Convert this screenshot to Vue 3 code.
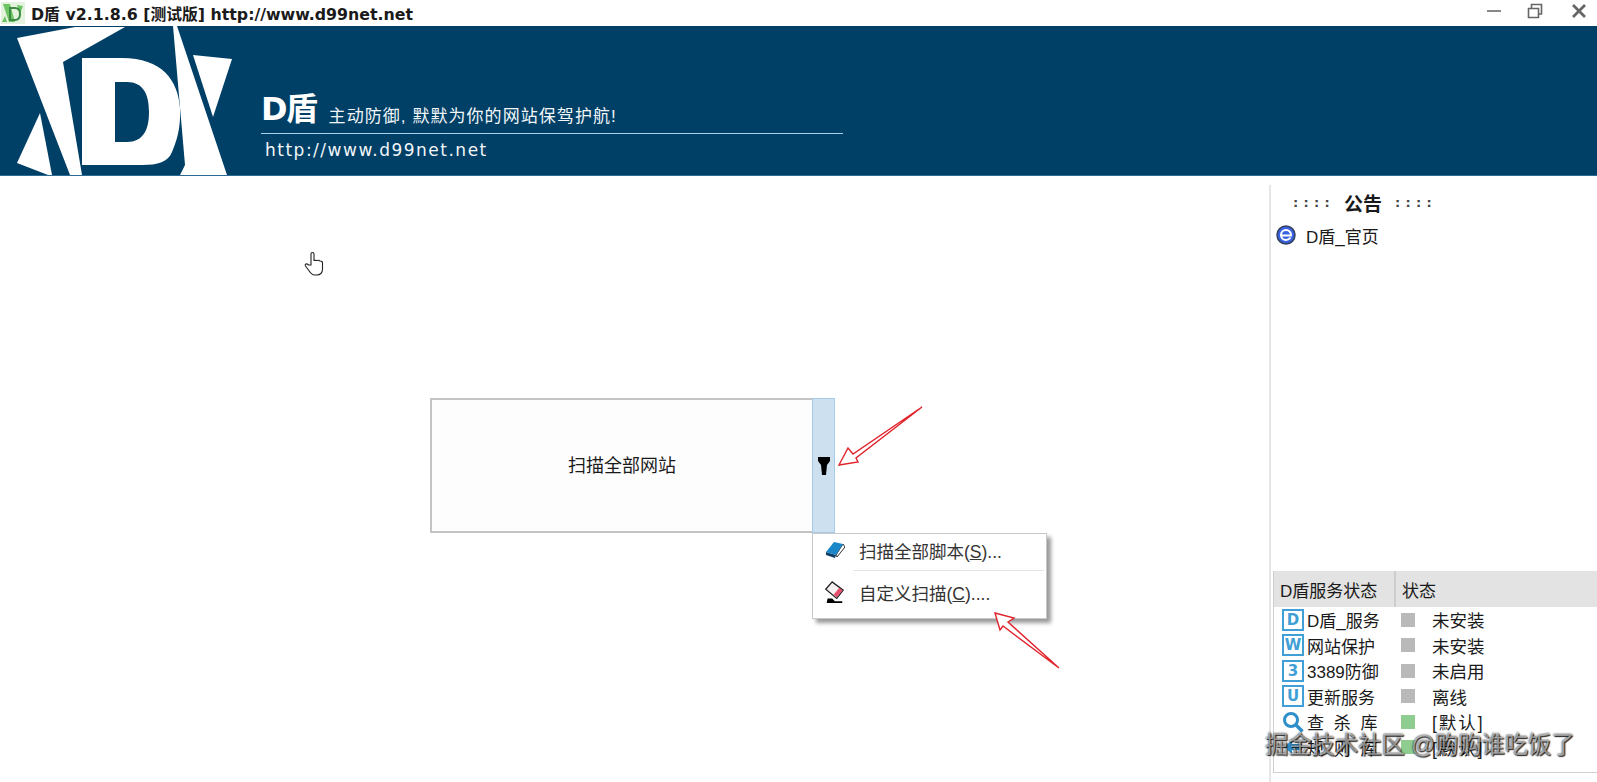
<template>
  <div class="window">
    <header class="titlebar">
      <svg class="app-icon" viewBox="0 0 24 22">
        <rect width="24" height="22" fill="#e4f3de" />
        <path d="M2 2h7l5 18H8z" fill="#6cc463" />
        <path d="M16 3l6 1-3 8z" fill="#6cc463" />
        <path d="M4 14l2 6H1z" fill="#6cc463" />
        <path d="M9 6h5c4 0 5 3 5 6s-1 6-5 6H9z" fill="none" stroke="#3c8a44" stroke-width="2" />
      </svg>
      <span class="title-text">D盾 v2.1.8.6 [测试版] http://www.d99net.net</span>
      <div class="win-controls">
        <svg viewBox="0 0 16 16" class="win-btn"><path d="M1 8h14" stroke="#888" stroke-width="2" /></svg>
        <svg viewBox="0 0 16 16" class="win-btn"><path d="M1.500 5.500h10v9h-10zM4.500 5V1.500h10V11H12" fill="none" stroke="#666" stroke-width="1.600" /></svg>
        <svg viewBox="0 0 16 16" class="win-btn close"><path d="M2 2l12 12M14 2L2 14" stroke="#666" stroke-width="2.800" /></svg>
      </div>
    </header>

    <section class="banner">
      <svg class="logo" viewBox="0 0 240 150">
        <path d="M17 12L75 1h50L63 36l19 113H70z" fill="#fff" />
        <path d="M40 87L17 137l31 12h4z" fill="#fff" />
        <path d="M173 0h4l50 149h-47l5-10z" fill="#fff" />
        <path d="M193 29l39 4-19 58z" fill="#fff" />
        <path fill-rule="evenodd" d="M82 32h40c40 0 56 22 58 50 1 22-4 34-8 44-4 10-14 13-30 13H82zM115 56v60h12c16 0 22-12 22-30s-6-30-22-30z" fill="#fff" />
      </svg>
      <div class="slogan">
        <div class="slogan-top">
          <span class="brand">D盾</span>
          <span class="motto">主动防御, 默默为你的网站保驾护航!</span>
        </div>
        <div class="site-url">http://www.d99net.net</div>
      </div>
    </section>

    <div class="content">
      <main class="main">
        <div class="scan-split">
          <div class="scan-btn">扫描全部网站</div>
          <div class="scan-drop">
            <svg viewBox="0 0 14 18" class="funnel"><path d="M1 0h12v4l-3 4-1 10H5L4 8 1 4z" fill="#000" /></svg>
          </div>
          <ul class="menu">
            <li v-for="item in menuItems" :key="item.label" class="menu-item">
              <svg v-if="item.icon === 'book'" viewBox="0 0 22 22" class="menu-icon">
                <path d="M20 5l2 3-8 10-1-2z" fill="#fff" stroke="#333" stroke-width="1" />
                <path d="M3 13l10 3-1 3-9-3z" fill="#0f3f66" />
                <path d="M3 13L11 3l9 2-7 11z" fill="#1b86c8" />
              </svg>
              <svg v-else viewBox="0 0 24 24" class="menu-icon">
                <path d="M5 19h5l3 3h8v2H4z" fill="#000" />
                <path d="M3 9l7-8 12 9-7 9z" fill="#f6f2f2" stroke="#222" stroke-width="1.400" />
                <path d="M17.500 7.500L21.500 10l-6.500 8-3.500-3z" fill="#e8506e" />
              </svg>
              <span class="menu-label">{{ item.label }}(<u>{{ item.key }}</u>){{ item.dots }}</span>
            </li>
          </ul>
        </div>

        <svg class="hand" viewBox="0 0 20 26">
          <path d="M7 14V3c0-2 3-2 3 0v7c0-1 3-1 3 0 0-1 3-1 3 .5 0-.5 2.500-.5 2.500 1V18c0 4-2 6-6 6h-2c-3 0-4-2-6-5l-3-4c-1-2 1-3 3-1z" fill="#fff" stroke="#222" stroke-width="1.100" />
        </svg>
      </main>

      <aside class="sidebar">
        <div class="notice">
          <div class="notice-title"><span class="dots">::::</span><b>公告</b><span class="dots">::::</span></div>
          <div class="notice-link">
            <svg viewBox="0 0 20 20" class="ie-icon">
              <circle cx="10" cy="10" r="9" fill="#3a62e0" stroke="#33415f" stroke-width="1.500" />
              <path d="M5 10.500h10c0-3.500-2.200-5.500-5-5.500s-5 2.200-5 5 2.200 5 5 5c2.200 0 3.500-1 4.500-2.500" fill="none" stroke="#fff" stroke-width="2" />
            </svg>
            <span>D盾_官页</span>
          </div>
        </div>

        <div class="status-panel">
          <div class="status-head">
            <div class="head-name">D盾服务状态</div>
            <div class="head-state">状态</div>
          </div>
          <div v-for="row in rows" :key="row.name" class="status-row">
            <span class="row-icon">
              <svg v-if="row.glyph === 'search'" viewBox="0 0 22 22" class="search-icon">
                <circle cx="9" cy="9" r="6.500" fill="none" stroke="#2f8fcb" stroke-width="3" />
                <path d="M13.500 13.500l7 7" stroke="#2f8fcb" stroke-width="3.500" />
              </svg>
              <svg v-else-if="row.glyph === 'shield'" viewBox="0 0 22 22" class="search-icon">
                <path d="M2 11l8-7v4h10v6H10v4z" fill="#2f8fcb" />
              </svg>
              <span v-else class="tile">{{ row.glyph }}</span>
            </span>
            <span class="row-name">{{ row.name }}</span>
            <span class="row-dot" :class="{ on: row.on }"></span>
            <span class="row-state" :class="{ wide: row.on }">{{ row.state }}</span>
          </div>
        </div>
      </aside>
    </div>

    <svg class="arrows" viewBox="0 0 1597 782">
      <path d="M839 465L848 448 853 454 922 407 856 458 858 462z" fill="#fff" stroke="#e0242c" stroke-width="1.400" stroke-linejoin="miter" />
      <path d="M995 613L1014 618 1008 622 1059 668 1003 626 1000 630z" fill="#fff" stroke="#e0242c" stroke-width="1.400" stroke-linejoin="miter" />
    </svg>

    <div class="watermark">掘金技术社区 @购购谁吃饭了</div>
  </div>
</template>

<script setup>
const menuItems = [
  { icon: 'book', label: '扫描全部脚本', key: 'S', dots: '...' },
  { icon: 'eraser', label: '自定义扫描', key: 'C', dots: '....' }
]

const rows = [
  { glyph: 'D', name: 'D盾_服务', state: '未安装', on: false },
  { glyph: 'W', name: '网站保护', state: '未安装', on: false },
  { glyph: '3', name: '3389防御', state: '未启用', on: false },
  { glyph: 'U', name: '更新服务', state: '离线', on: false },
  { glyph: 'search', name: '查 杀 库', state: '[默认]', on: true },
  { glyph: 'shield', name: '规 则 库', state: '[默认]', on: true }
]
</script>

<style>
html,
body {
  margin: 0;
  background: #fff;
}
</style>

<style scoped>
.window {
  position: relative;
  width: 1597px;
  height: 782px;
  overflow: hidden;
  display: flex;
  flex-direction: column;
  background: #fff;
  color: #1a1a1a;
  font-family: "Liberation Sans", "Noto Sans CJK SC", sans-serif;
  font-size: 17px;
}

.titlebar {
  height: 26px;
  flex: none;
  display: flex;
  align-items: center;
  padding-left: 1px;
}

.app-icon {
  width: 24px;
  height: 22px;
}

.title-text {
  margin-left: 6px;
  font-family: "DejaVu Sans", "Noto Sans CJK SC", sans-serif;
  font-weight: 700;
  font-size: 15.800px;
  white-space: nowrap;
}

.win-controls {
  margin-left: auto;
  align-self: flex-start;
  display: flex;
  gap: 25px;
  padding: 3px 10px 0 0;
}

.win-btn {
  width: 16px;
  height: 16px;
}

.win-btn.close {
  margin-left: 3px;
}

.banner {
  height: 150px;
  flex: none;
  display: flex;
  background: #003f66;
  border-bottom: 1px solid #2a6c94;
  box-sizing: border-box;
}

.logo {
  width: 240px;
  height: 150px;
  flex: none;
}

.slogan {
  margin-left: 21px;
  width: 582px;
  color: #f2f6f8;
}

.slogan-top {
  height: 108px;
  box-sizing: border-box;
  display: flex;
  align-items: flex-end;
  border-bottom: 1px solid #a9d0e6;
  padding-bottom: 4px;
}

.brand {
  font-family: "DejaVu Sans", "Noto Sans CJK SC", sans-serif;
  font-weight: 700;
  font-size: 32px;
  line-height: 40px;
  letter-spacing: -1.500px;
  color: #fff;
}

.motto {
  margin-left: 12px;
  font-size: 17px;
  line-height: 24px;
  letter-spacing: 1.060px;
}

.site-url {
  padding: 4px 0 0 4px;
  font-family: "DejaVu Sans", sans-serif;
  font-size: 17px;
  line-height: 24px;
  letter-spacing: 1.500px;
}

.content {
  flex: 1;
  display: flex;
  min-height: 0;
}

.main {
  flex: 1;
  position: relative;
  padding: 222px 0 0 430px;
}

.scan-split {
  position: relative;
  display: flex;
  width: 405px;
  height: 135px;
}

.scan-btn {
  flex: 1;
  display: flex;
  align-items: center;
  justify-content: center;
  background: #fdfdfd;
  border: 2px solid #c4c4c4;
  border-right: none;
  font-size: 18px;
  padding-bottom: 4px;
}

.scan-drop {
  width: 23px;
  flex: none;
  box-sizing: border-box;
  display: flex;
  align-items: center;
  justify-content: center;
  background: #cce0f0;
  border: 1px solid #a5cbe6;
}

.funnel {
  width: 14px;
  height: 18px;
}

.menu {
  position: absolute;
  left: 382px;
  top: 135px;
  width: 235px;
  margin: 0;
  padding: 0;
  list-style: none;
  box-sizing: border-box;
  background: #fff;
  border: 1px solid #c8c8c8;
  box-shadow: 4px 4px 4px rgba(0, 0, 0, 0.4);
}

.menu-item {
  height: 36px;
  box-sizing: border-box;
  padding: 0 0 4px 10px;
  display: flex;
  align-items: center;
  color: #333;
}

.menu-item + .menu-item {
  position: relative;
  height: 48px;
  padding-bottom: 4px;
}

.menu-item + .menu-item::before {
  content: "";
  position: absolute;
  left: 40px;
  right: 2px;
  top: 0;
  border-top: 1px solid #e4e4e4;
}

.menu-icon {
  width: 22px;
  height: 22px;
  flex: none;
}

.menu-label {
  margin-left: 14px;
  font-size: 17.500px;
  white-space: nowrap;
}

.hand {
  position: absolute;
  left: 304px;
  top: 75px;
  width: 20px;
  height: 26px;
}

.sidebar {
  width: 328px;
  flex: none;
  margin-top: 9px;
  box-sizing: border-box;
  border-left: 2px solid #e6e6e6;
  display: flex;
  flex-direction: column;
}

.notice {
  flex: 1;
  padding: 5px 0 0 5px;
}

.notice-title {
  display: flex;
  align-items: center;
  gap: 13px;
  padding-left: 17px;
  height: 24px;
  font-size: 19px;
}

.notice-title b {
  margin-left: -4px;
}

.dots {
  font-family: "DejaVu Sans", sans-serif;
  font-size: 13px;
  letter-spacing: 5.300px;
  font-weight: 700;
  color: #444;
}

.notice-link {
  display: flex;
  align-items: center;
  gap: 10px;
  margin-top: 9px;
  height: 24px;
  font-size: 17px;
}

.ie-icon {
  width: 20px;
  height: 20px;
}

.status-panel {
  height: 202px;
  flex: none;
  margin: 0 0 9px 2px;
  box-sizing: border-box;
  border-left: 1px solid #cfcfcf;
  border-bottom: 1px solid #cfcfcf;
}

.status-head {
  height: 36px;
  display: flex;
  background: #e3e3e3;
  font-size: 17px;
  line-height: 42px;
}

.head-name {
  width: 122px;
  padding-left: 6px;
  box-sizing: border-box;
  border-right: 2px solid #cdcdcd;
}

.head-state {
  padding-left: 6px;
}

.status-row {
  height: 25.500px;
  display: flex;
  align-items: center;
  font-size: 17px;
}

.row-icon {
  width: 22px;
  height: 22px;
  flex: none;
  margin-left: 8px;
  display: flex;
}

.tile {
  width: 22px;
  height: 22px;
  box-sizing: border-box;
  border: 2px solid #3f9fd6;
  color: #3f9fd6;
  font-family: "DejaVu Sans", sans-serif;
  font-weight: 700;
  font-size: 15px;
  line-height: 18px;
  text-align: center;
}

.search-icon {
  width: 22px;
  height: 22px;
}

.row-name {
  width: 94px;
  margin-left: 3px;
  white-space: nowrap;
  word-spacing: 5px;
}

.row-dot {
  width: 14px;
  height: 14px;
  flex: none;
  background: #b9b9b9;
}

.row-dot.on {
  background: #8fcc8f;
}

.row-state {
  margin-left: 17px;
  font-size: 17.500px;
  white-space: nowrap;
}

.row-state.wide {
  letter-spacing: 2px;
}

.arrows {
  position: absolute;
  left: 0;
  top: 0;
  width: 1597px;
  height: 782px;
  pointer-events: none;
}

.watermark {
  position: absolute;
  left: 1265px;
  top: 729px;
  font-size: 23.300px;
  line-height: 32px;
  white-space: nowrap;
  color: rgba(255, 255, 255, 0.55);
  text-shadow: 0 0 2px #000, 1px 1px 1px rgba(0, 0, 0, 0.8);
}
</style>
